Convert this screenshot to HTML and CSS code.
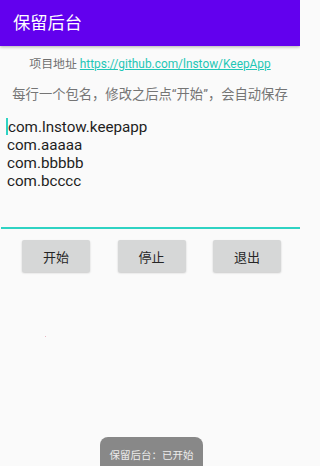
FILE: index.html
```html
<!DOCTYPE html>
<html lang="zh">
<head>
<meta charset="utf-8">
<title>保留后台</title>
<link rel="stylesheet" href="styles.css">
</head>
<body>
<div class="screen">
  <header class="appbar">保留后台</header>
  <p class="project">项目地址 <a class="link" href="#">https://github.com/lnstow/KeepApp</a></p>
  <p class="hint">每行一个包名，修改之后点“开始”，会自动保存</p>
  <div class="editor">
    <div class="line"><span class="cursor"></span>com.lnstow.keepapp</div>
    <div class="line">com.aaaaa</div>
    <div class="line">com.bbbbb</div>
    <div class="line">com.bcccc</div>
  </div>
  <div class="actions">
    <button class="btn">开始</button>
    <button class="btn">停止</button>
    <button class="btn">退出</button>
  </div>
  <span class="dot"></span>
  <div class="toast">保留后台：已开始</div>
</div>
</body>
</html>
```

FILE: styles.css
```css
html, body {
  margin: 0;
  padding: 0;
}
body {
  background: #fafafa;
  font-family: Roboto, "Noto Sans CJK SC", sans-serif;
}
.screen {
  position: relative;
  width: 300px;
  height: 466px;
  overflow: hidden;
  background: #fafafa;
}
.appbar {
  height: 46px;
  line-height: 46px;
  padding-left: 13px;
  background: #6200ee;
  color: #ffffff;
  font-size: 17.3px;
  box-shadow: 0 1px 3px rgba(0, 0, 0, 0.3);
}
.project {
  margin: 9px 0 0;
  line-height: 18px;
  font-size: 11.9px;
  color: #6f6f6f;
  text-align: center;
}
.link {
  color: #1fc7b6;
  text-decoration: underline;
}
.hint {
  margin: 13px 0 0;
  line-height: 18px;
  font-size: 13.3px;
  color: #757575;
  text-align: center;
}
.editor {
  height: 109px;
  padding: 14px 0 0 6px;
  border-bottom: 2px solid #2fd3c3;
  margin: 0 0 0 1px;
  color: #1e1e1e;
  font-size: 15.2px;
}
.line {
  line-height: 18px;
  white-space: nowrap;
}
.cursor {
  display: inline-block;
  width: 2px;
  height: 17px;
  margin-left: -1px;
  vertical-align: -3px;
  background: #2fd3c3;
}
.actions {
  display: flex;
  gap: 27.5px;
  padding-left: 22px;
  margin-top: 11px;
}
.btn {
  width: 68px;
  height: 32px;
  padding: 0;
  border: none;
  border-radius: 2px;
  background: #d6d7d7;
  color: #262626;
  font-family: Roboto, "Noto Sans CJK SC", sans-serif;
  font-size: 13px;
  box-shadow: 0 1px 2px rgba(0, 0, 0, 0.2);
}
.dot {
  position: absolute;
  left: 45px;
  top: 336px;
  width: 1px;
  height: 1px;
  background: #e9b7c4;
}
.toast {
  position: absolute;
  left: 100px;
  top: 437px;
  width: 103px;
  height: 40px;
  padding-top: 10px;
  box-sizing: border-box;
  border-radius: 8px;
  background: #888888;
  color: #ececec;
  font-size: 10.5px;
  text-align: center;
}
```
